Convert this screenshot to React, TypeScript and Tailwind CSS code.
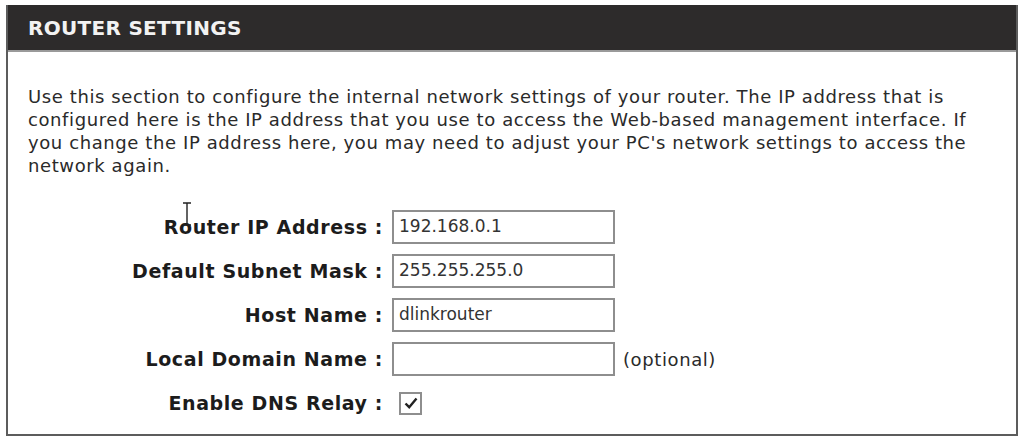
import React from "react"

const font = { fontFamily: 'Tahoma, "DejaVu Sans", sans-serif' }

const rows = [
  { label: "Router IP Address", value: "192.168.0.1" },
  { label: "Default Subnet Mask", value: "255.255.255.0" },
  { label: "Host Name", value: "dlinkrouter" },
  { label: "Local Domain Name", value: "", note: "(optional)" },
]

function CheckBox() {
  return (
    <div className="ml-[7px] flex h-[23px] w-[23px] items-center justify-center border-2 border-[#8e8e8e] bg-white">
      <svg viewBox="0 0 16 16" className="h-[16px] w-[16px]">
        <path d="M2.5 8.5 L6.2 12.2 L13.5 3.5" fill="none" stroke="#222" strokeWidth="2.4" />
      </svg>
    </div>
  )
}

export default function App() {
  return (
    <div className="min-h-screen bg-white pl-[6px] pt-[5px] text-[#2b2b2b]" style={font}>
      <div className="w-[1012px] border-2 border-t-0 border-[#5c5c5c]">
        <div className="flex h-[47px] items-center border-b-2 border-[#9a9a9a] bg-[#2d2b2b] pl-[20px]">
          <h1 className="text-[20px] font-bold tracking-[0.3px] text-[#f2f2f2]">ROUTER SETTINGS</h1>
        </div>

        <div className="relative px-[20px] pb-[14px] pt-[33px]">
          {/* description */}
          <p className="text-[18px] leading-[23px] tracking-[0.6px] text-[#2a2a2a]">
            Use this section to configure the internal network settings of your router. The IP address that is
            <br />
            configured here is the IP address that you use to access the Web-based management interface. If
            <br />
            you change the IP address here, you may need to adjust your PC's network settings to access the
            <br />
            network again.
          </p>

          {/* form */}
          <div className="-ml-[20px] mt-[33px] grid grid-cols-[375px_auto] items-center gap-x-[9px] gap-y-[10px]">
            {rows.map((row) => (
              <React.Fragment key={row.label}>
                <div className="text-right text-[19px] font-bold tracking-[0.6px] text-[#1c1c1c]">
                  {row.label} :
                </div>
                <div className="flex items-center gap-[8px]">
                  <div className="flex h-[34px] w-[223px] items-center border-2 border-[#8e8e8e] bg-white px-[5px] text-[17px] text-[#333]">
                    {row.value}
                  </div>
                  {row.note && (
                    <span className="text-[18px] tracking-[0.6px] text-[#2a2a2a]">{row.note}</span>
                  )}
                </div>
              </React.Fragment>
            ))}
            <div className="text-right text-[19px] font-bold tracking-[0.6px] text-[#1c1c1c]">
              Enable DNS Relay :
            </div>
            <div className="flex h-[34px] items-center">
              <CheckBox />
            </div>
          </div>

          {/* mouse text cursor */}
          <svg className="absolute left-[174px] top-[150px] h-[24px] w-[10px]" viewBox="0 0 10 24">
            <path d="M1 1 H9 M5 1 V23 M1 23 H9" fill="none" stroke="#222" strokeWidth="1.4" />
          </svg>
        </div>
      </div>
    </div>
  )
}
